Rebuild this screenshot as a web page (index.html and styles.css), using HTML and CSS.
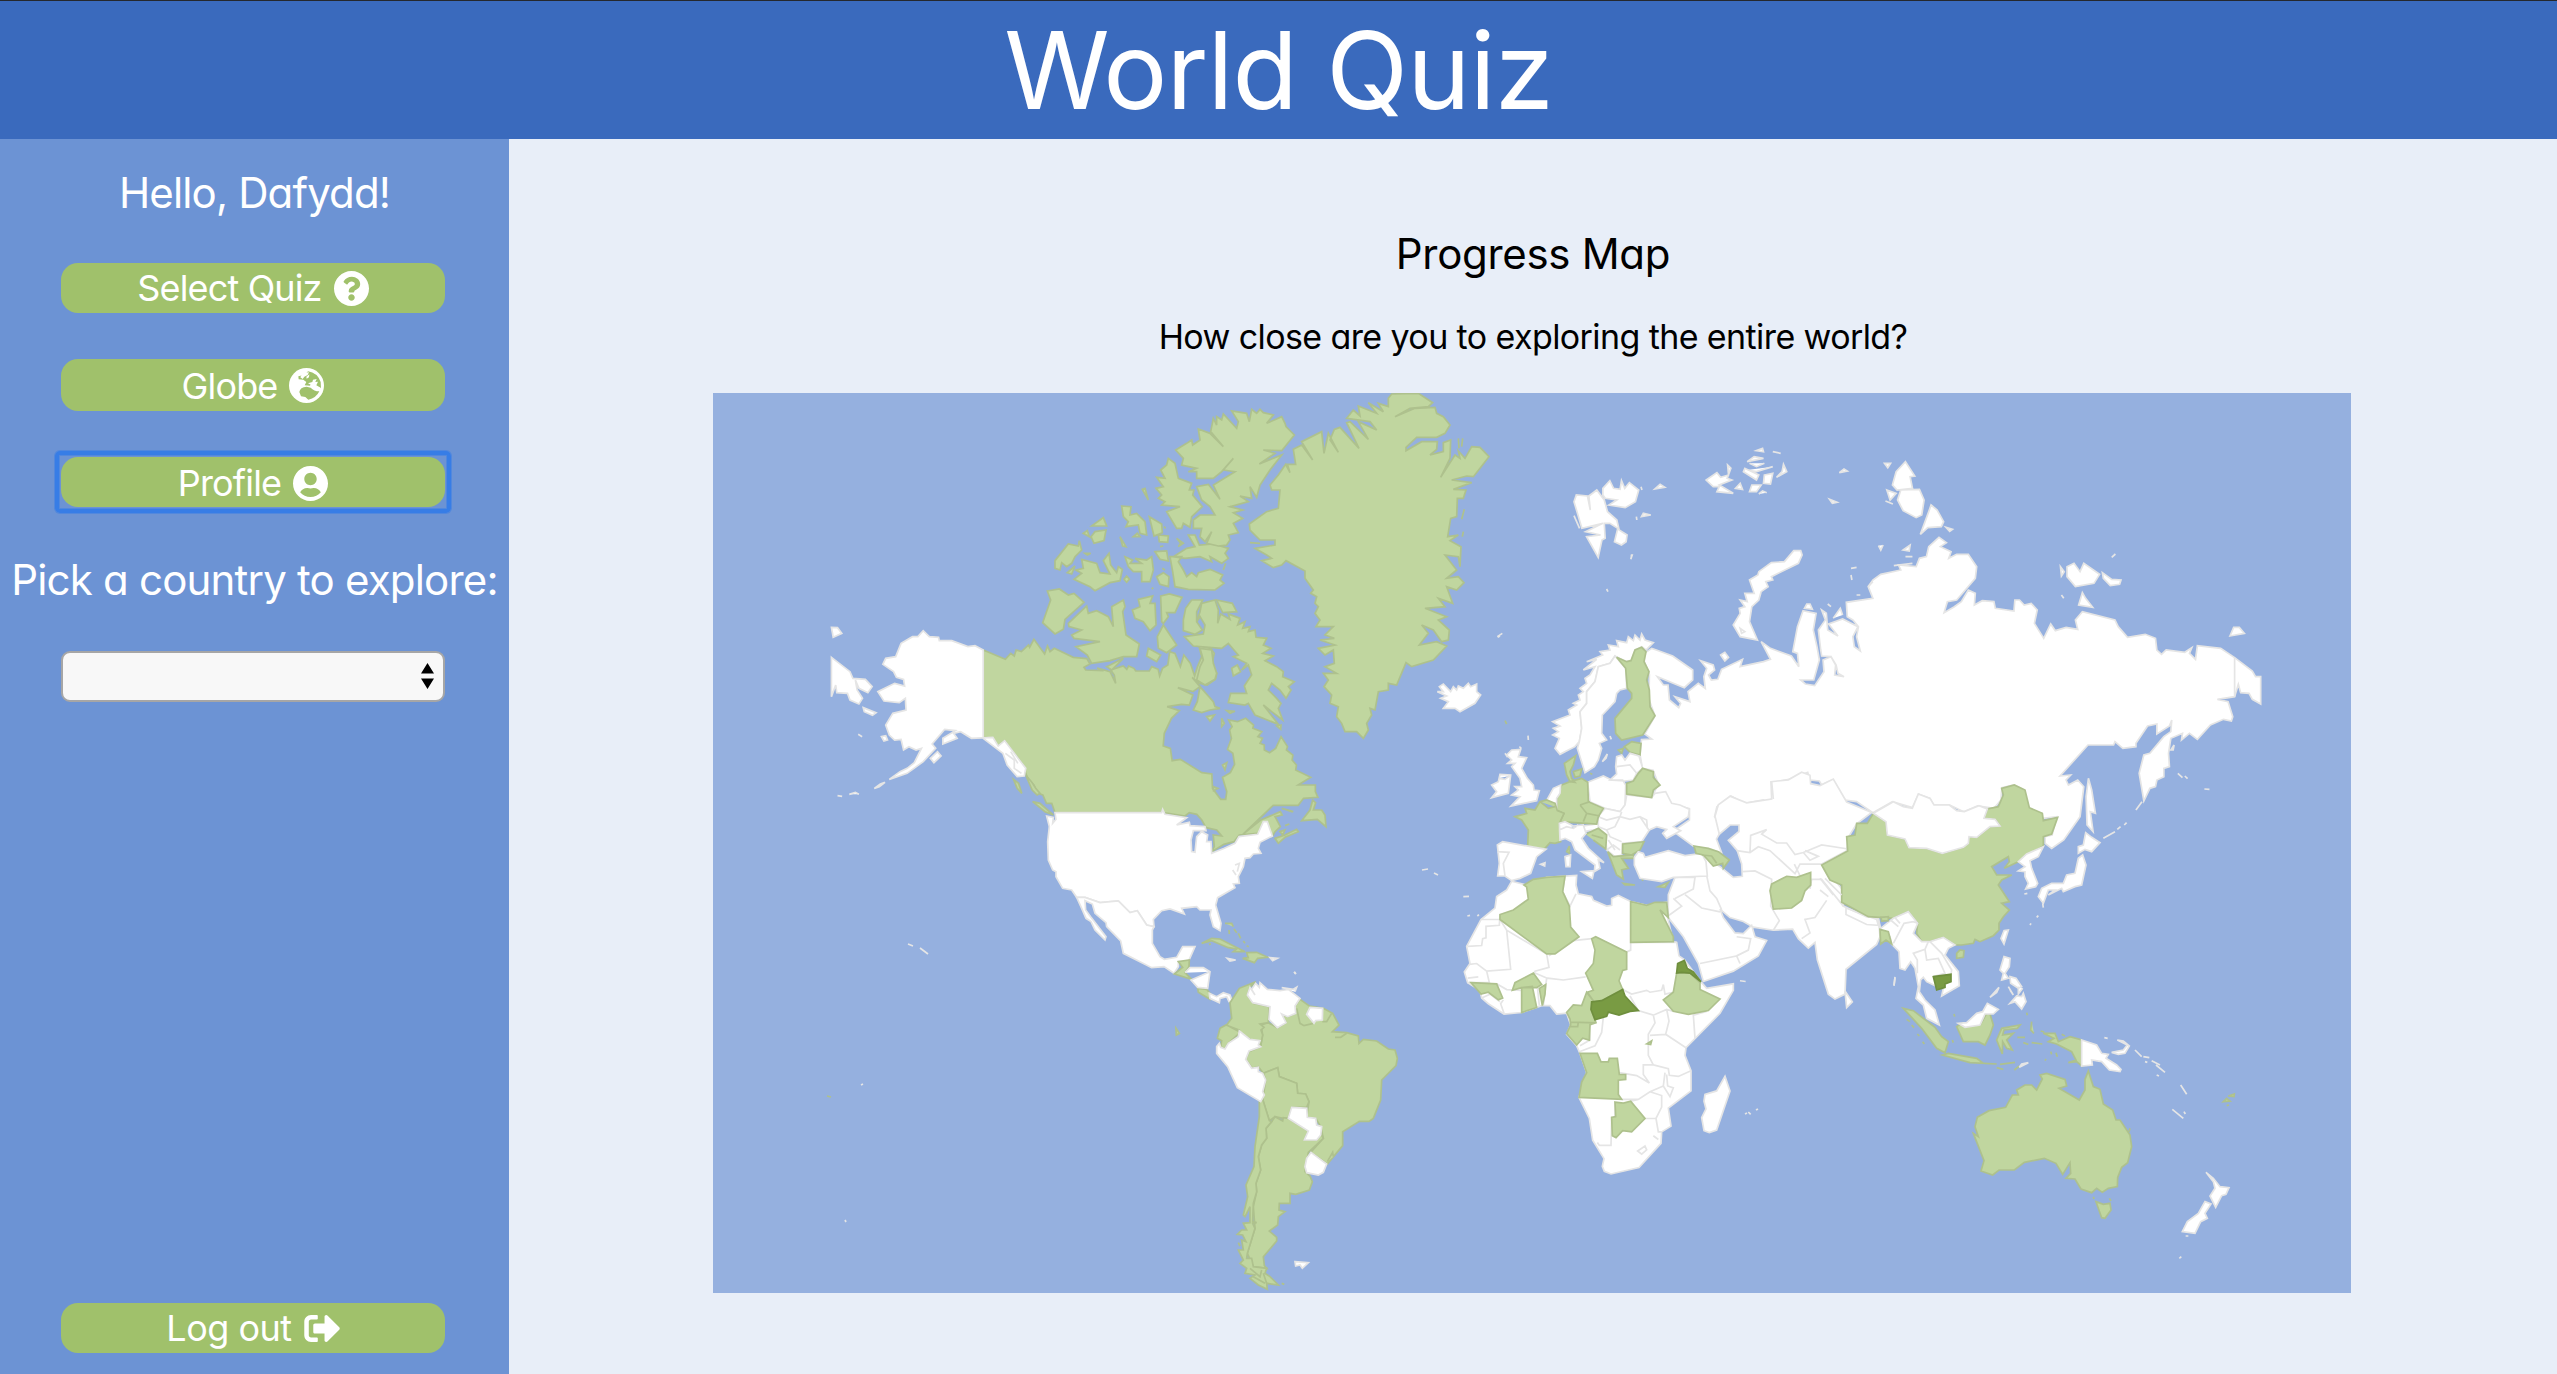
FILE: index.html
```html
<!DOCTYPE html>
<html lang="en">
<head>
<meta charset="utf-8">
<title>World Quiz</title>
<link rel="stylesheet" href="styles.css">
</head>
<body>
<header class="header"><h1 class="title">World Quiz</h1></header>
<div class="layout">
<aside class="sidebar">
<p class="greeting">Hello, Dafydd!</p>
<nav class="menu">
<button class="btn"><span class="label">Select Quiz</span><svg class="icon" viewBox="8 8 496 496"><path d="M504 256c0 136.997-111.043 248-248 248S8 392.997 8 256C8 119.083 119.043 8 256 8s248 111.083 248 248zM262.655 90c-54.497 0-89.255 22.957-116.549 63.758-3.536 5.286-2.353 12.415 2.715 16.258l34.699 26.31c5.205 3.947 12.621 3.008 16.665-2.122 17.864-22.658 30.113-35.797 57.303-35.797 20.429 0 45.698 13.148 45.698 32.958 0 14.976-12.363 22.667-32.534 33.976C247.128 238.528 216 254.941 216 296v4c0 6.627 5.373 12 12 12h56c6.627 0 12-5.373 12-12v-1.333c0-28.462 83.186-29.647 83.186-106.667 0-58.002-60.165-102-116.531-102zM256 338c-25.365 0-46 20.635-46 46 0 25.364 20.635 46 46 46s46-20.636 46-46c0-25.365-20.635-46-46-46z"/></svg></button>
<button class="btn btn-tall"><span class="label">Globe</span><svg class="icon" viewBox="505 324 105 105"><circle cx="557.500" cy="376.500" r="52.500"/><path class="cut" d="M540 347L552 345L562 334Q590 338 600 366L601 385L584 377L572 369L568 377L552 376L557 366L548 359L534 358L533 349ZM536 396Q538 381 558 380L570 383Q580 394 596 394Q587 414 563 419L554 411L541 409Z"/><path d="M541 347L552 338L565 337L561 345L551 350L546 357L539 352ZM557 350L566 343L565 352L558 356ZM562 370L575 366L577 359L588 357L584 366L592 365L587 376L600 383L597 391L572 375Z"/></svg></button>
<button class="btn btn-focus"><span class="label">Profile</span><svg class="icon" viewBox="0 8 496 496"><path d="M248 8C111 8 0 119 0 256s111 248 248 248 248-111 248-248S385 8 248 8zm0 96c48.6 0 88 39.4 88 88s-39.4 88-88 88-88-39.4-88-88 39.4-88 88-88zm0 344c-58.7 0-111.3-26.6-146.5-68.2 18.8-35.4 55.6-59.8 98.5-59.8 2.4 0 4.8.4 7.1 1.1 13 4.2 26.6 6.9 40.9 6.9 14.3 0 28-2.7 40.9-6.9 2.300-.7 4.700-1.100 7.100-1.100 42.900 0 79.700 24.400 98.500 59.800C359.300 421.400 306.700 448 248 448z"/></svg></button>
</nav>
<p class="pick">Pick a country to explore:</p>
<div class="select" role="listbox"><svg class="arrows" viewBox="0 0 13 26"><path d="M0 10.500L6.500 0L13 10.500ZM0 15.500H13L6.500 26Z"/></svg></div>
<button class="btn logout"><span class="label">Log out</span><svg class="icon icon-out" viewBox="0 64 504 384"><path d="M497 273L329 441c-15 15-41 4.500-41-17v-96H152c-13.300 0-24-10.700-24-24v-96c0-13.300 10.700-24 24-24h136V88c0-21.400 25.900-32 41-17l168 168c9.300 9.400 9.300 24.600 0 34zM192 436v-40c0-6.600-5.400-12-12-12H96c-17.700 0-32-14.300-32-32V160c0-17.700 14.300-32 32-32h84c6.600 0 12-5.400 12-12V76c0-6.600-5.400-12-12-12H96c-53 0-96 43-96 96v192c0 53 43 96 96 96h84c6.600 0 12-5.400 12-12z"/></svg></button>
</aside>
<main class="main">
<h2 class="heading">Progress Map</h2>
<p class="sub">How close are you to exploring the entire world?</p>
<svg class="map" viewBox="713 393 1638 900">
<!-- Canada -->
<g class="seen" transform="translate(800 390) scale(.35714 .33333)">
<path d="M513 780L575 808L590 790L600 798L605 780L620 785L640 765L643 772L655 748L685 792L693 768L700 785L712 775L765 802L803 806L812 822L795 832L800 840L850 842L832 834L868 845L884 880L880 855L870 840L905 828L915 838L920 828L935 835L940 843L978 843L985 830L1003 838L1007 858L1015 835L1030 825L1035 785L1050 790L1065 830L1075 795L1093 820L1105 858L1113 830L1125 800L1117 768L1150 775L1160 790L1153 820L1167 850L1163 868L1140 885L1118 880L1098 862L1120 890L1100 905L1058 893L1100 915L1090 945L1068 943L1028 950L1062 962L1040 985L1020 1030L1017 1068L1037 1075L1042 1112L1065 1108L1125 1148L1153 1152L1155 1195L1178 1228L1192 1228L1195 1205L1183 1162L1205 1148L1217 1123L1212 1090L1197 1078L1208 1045L1203 1020L1210 1010L1200 990L1225 995L1248 985L1270 1005L1268 1015L1293 1025L1282 1040L1295 1045L1288 1060L1300 1065L1300 1080L1315 1088L1332 1075L1347 1040L1365 1070L1362 1080L1380 1095L1378 1110L1390 1125L1388 1140L1430 1162L1395 1185L1443 1185L1443 1205L1450 1222L1410 1225L1395 1246L1325 1246L1240 1333L1290 1290L1345 1265L1350 1275L1330 1280L1345 1310L1330 1325L1323 1338L1280 1330L1230 1335L1215 1355L1187 1363L1152 1386L1160 1370L1157 1335L1181 1338L1167 1320L1137 1313L1125 1290L1111 1273L1090 1268L1078 1278L1017 1268L714 1268L705 1240L690 1240L680 1215L665 1210L655 1185L640 1170L632 1150L628 1130L573 1052L555 1068L540 1045L513 1042Z"/>
<path d="M598 1168L612 1180L621 1210L608 1195ZM1183 1125L1195 1118L1190 1140ZM1157 1190L1170 1195L1158 1202ZM632 1155L648 1175L660 1195L672 1210L664 1215L650 1200Z"/>
</g>
<g class="seen" transform="translate(1000 390) scale(.33333)">
<path d="M605 640L645 630L655 660L653 700L662 672L690 688L685 672L720 685L713 705L735 695L728 715L750 710L745 725L765 720L768 742L800 745L790 765L813 775L788 790L820 798L795 812L830 830L850 845L848 860L883 875L865 890L873 900L858 925L840 900L815 880L805 900L830 925L843 940L835 955L848 990L815 965L790 945L835 1003L765 975L745 940L735 945L685 938L692 910L740 910L733 888L755 855L745 825L725 840L740 820L700 800L715 795L685 760L665 775L580 768L553 740L610 732L615 705L600 680L590 695L600 665Z"/>
<path d="M575 630L608 630L590 665L590 695L607 720L585 733L550 722L550 690L557 655ZM650 630L697 640L710 665L668 668ZM600 775L635 780L640 820L650 850L645 868L615 885L590 870L600 830L610 810ZM600 890L640 935L645 950L660 955L630 960L605 968L580 960L592 935ZM620 980L643 975L630 993ZM665 985L673 1000L665 1010ZM695 835L712 825L722 845L700 858ZM680 962L705 964L690 970ZM830 1008L843 1005L842 1018Z"/>
<path d="M205 700L260 648L265 670L290 662L325 680L340 710L335 650L370 630L375 650L368 665L378 735L418 762L410 800L370 800L330 812L275 820L262 795L228 770L300 755L222 745L215 735L245 720L207 710ZM142 603L178 597L205 615L222 610L252 637L195 688L190 718L165 732L128 698L152 630ZM397 660L420 650L415 628L458 618L450 640L465 640L468 705L450 722L430 695L405 685ZM482 618L508 612L546 622L525 668L500 668L505 680L490 700L485 695ZM490 705L530 765L500 788L475 775L472 740ZM445 775L482 795L470 815L440 798ZM320 830L370 805L355 820L335 840Z"/>
<path d="M222 568L245 550L228 540L250 535L245 508L290 520L300 548L330 552L310 512L327 490L332 525L350 548L355 530L367 538L360 572L330 578L285 602L270 590ZM165 535L165 512L205 462L235 468L238 452L245 480L225 500L215 520L200 530L185 518L180 540ZM375 500L398 510L390 520L425 520L405 505L440 510L455 500L460 540L450 575L425 575L425 545L400 545L385 530ZM470 560L490 548L507 560L505 590L480 583ZM510 500L545 500L535 515L550 540L560 560L575 548L590 560L595 548L630 538L668 555L660 570L672 580L645 600L565 598L525 590L518 545ZM565 435L585 435L598 465L640 462L685 475L675 490L685 505L665 520L630 500L635 515L600 500L555 505L520 500L560 475L585 470ZM465 485L500 483L505 513L480 508Z"/>
<path d="M505 205L525 220L535 265L575 280L568 300L582 300L578 315L607 350L575 380L570 412L550 400L545 415L530 415L500 365L540 350L485 345L495 335L475 325L485 315L468 295L490 290L470 262L495 265L482 240L500 225Z"/>
<path d="M527 180L560 160L575 150L578 165L600 150L595 117L630 130L670 170L632 125L640 85L650 105L650 80L665 90L670 72L710 115L715 95L695 63L740 70L748 95L755 58L770 70L780 58L790 68L820 75L800 100L845 80L855 100L858 110L883 135L845 182L790 180L825 190L778 222L845 195L810 240L780 285L770 322L750 290L755 325L720 318L745 335L690 350L728 360L700 368L728 385L700 400L715 428L685 435L690 450L680 465L655 468L620 460L635 425L615 455L600 440L605 415L580 415L580 390L600 375L645 375L630 350L605 330L590 290L625 283L660 328L640 285L705 245L670 240L700 205L665 245L640 265L590 265L590 245L565 245L590 235L545 225L550 205Z"/>
<path d="M365 348L393 350L390 375L410 370L435 395L440 435L420 430L415 405L378 410L385 395L370 380ZM448 380L485 402L487 428L462 438ZM475 435L505 438L503 457L478 455ZM275 408L310 383L320 408ZM273 440L285 425L318 420L312 452L282 460ZM427 298L435 295L445 330ZM360 440L378 470L368 468ZM250 430L262 422L268 440ZM530 445L550 460L535 470L542 460ZM400 440L412 430L420 440ZM255 490L272 490L262 495ZM372 568L380 558L388 568L380 577ZM202 548L225 528L215 552ZM480 470L490 468M492 410L497 415M455 597L460 593M482 597L485 600M487 535L495 540M670 540L677 520"/>
</g>
<g class="seen" transform="translate(1030 780) scale(.33333)">
<path d="M815 122L840 90L848 60L857 68L850 90L875 90L885 105L888 140L862 118ZM735 175L765 165L800 148L805 155L765 172L745 190ZM750 155L765 150L758 165ZM755 85L790 95M770 90L785 95M765 137L778 132M8 65L30 70L70 105L45 95Z"/>
</g>
<!-- Greenland -->
<path class="seen" transform="translate(1000 390) scale(.33333)" d="M810 285L835 255L857 223L870 248L862 223L887 223L880 178L905 165L938 210L905 155L965 125L972 190L985 130L1015 187L990 150L1003 118L1020 112L1077 175L1040 98L1050 95L1105 148L1075 95L1130 120L1110 95L1040 85L1060 60L1080 78L1075 48L1130 70L1105 38L1150 65L1135 40L1165 50L1165 25L1175 12L1255 10L1298 38L1285 50L1230 55L1185 80L1245 55L1305 52L1310 70L1330 80L1350 105L1335 130L1310 142L1250 142L1218 172L1218 182L1265 155L1312 155L1310 178L1290 195L1330 185L1330 158L1352 150L1350 205L1322 262L1365 195L1380 205L1375 183L1395 205L1415 170L1440 172L1467 200L1440 235L1420 260L1400 258L1355 270L1415 278L1360 298L1398 300L1390 325L1372 325L1370 380L1352 385L1343 440L1375 435L1350 452L1383 470L1380 530L1375 500L1335 495L1370 540L1340 565L1375 560L1392 578L1370 600L1340 590L1358 640L1315 625L1335 650L1275 655L1340 680L1315 690L1348 720L1345 750L1325 755L1300 720L1265 705L1285 730L1258 765L1310 755L1340 768L1300 810L1235 830L1218 818L1190 885L1165 880L1165 900L1135 905L1125 960L1110 955L1115 975L1100 1000L1105 1020L1090 1045L1070 1025L1035 1025L1025 1000L1010 980L1015 950L990 940L995 915L972 890L985 870L970 850L1010 850L975 830L1003 820L1000 780L975 795L955 775L1005 765L960 750L1003 745L975 735L1000 710L948 710L960 690L945 670L955 650L945 640L950 620L932 610L940 600L915 565L915 543L858 512L845 525L820 533L785 512L815 505L800 495L765 475L825 465L825 450L780 450L750 420L748 402L800 365L835 355L840 300L815 300Z"/>
<g class="seen" transform="translate(1000 390) scale(.33333)"><path d="M1375 145L1377 175M1388 145L1385 170M1393 358L1385 388M1390 425L1387 440M750 458L780 460"/></g>
<!-- Alaska -->
<g class="unseen" transform="translate(800 390) scale(.35714 .33333)">
<path d="M513 780L490 767L470 770L425 752L390 752L388 742L362 740L345 722L330 740L315 740L283 760L268 800L240 805L232 823L262 845L270 862L290 868L293 888L265 880L218 905L235 933L278 938L295 925L297 960L260 970L240 1005L250 1035L265 1050L283 1048L290 1080L305 1070L325 1080L340 1075L320 1118L300 1135L280 1145L250 1168L300 1150L345 1115L380 1075L370 1062L405 1018L435 1022L400 1045L400 1062L440 1045L430 1030L450 1025L480 1045L540 1042L555 1068L573 1052L632 1135L628 1158L608 1160L580 1125L568 1090L513 1045Z"/>
<path d="M88 712L105 713L117 730L93 742ZM88 802L140 845L148 865L183 868L202 890L190 908L165 895L155 870L160 900L175 925L165 942L140 930L133 910L103 908L100 885L88 920ZM177 953L213 968L203 976L180 965ZM365 1105L385 1085L395 1098L375 1118ZM228 1040L240 1037L245 1050L235 1053ZM208 1195L225 1182L238 1177L222 1190ZM138 1213L155 1207L165 1213M105 1217L118 1219M163 1033L174 1040M575 1090L600 1110L600 1135L620 1150M590 1085L610 1120"/>
</g>
<!-- United States, Mexico, Central America -->
<g transform="translate(1030 780) scale(.33333)">
<path class="unseen" d="M75 98L395 98L398 88L405 103L470 113L440 135L478 127L480 137L525 140L528 152L490 152L483 180L485 215L495 217L500 170L515 155L533 165L530 185L543 185L545 220L583 205L615 190L627 170L683 163L700 125L712 125L727 168L690 187L685 205L693 220L670 222L660 233L645 235L640 260L625 290L628 310L610 312L615 323L563 353L557 375L573 430L570 452L550 440L540 405L543 390L510 390L500 380L455 385L463 402L420 387L395 392L370 418L372 440L350 435L322 392L300 398L265 363L210 368L165 352L140 352L125 330L98 325L78 290L78 275L68 270L55 240L53 185L58 140L50 108L70 112L68 130L78 118Z"/>
<path class="unseen" d="M140 352L165 352L210 368L265 363L300 398L322 392L350 435L372 440L367 450L367 490L390 530L403 538L440 532L458 500L495 500L475 545L445 545L445 560L432 580L402 560L365 563L280 520L272 483L230 440L228 428L195 400L187 372L165 362L167 390L183 412L228 470L225 480L195 450L183 425L168 415L155 385Z"/>
<path class="seen" d="M445 545L478 540L477 560L465 578L485 598L433 582L458 562ZM503 625L530 628L542 643L540 658L505 637Z"/>
<path class="unseen" d="M465 578L480 563L520 563L540 575L533 625L503 622L483 600L540 575M538 640L560 650L580 638L600 645L607 665L597 665L590 650L570 655L568 668L540 655Z"/>
<path class="seen" d="M515 490L545 475L570 477L645 515L610 515L620 507L595 503L545 482ZM638 535L655 533L650 518L680 517L713 532L683 535L673 548ZM585 430L605 430L610 440M612 447L620 458M625 460L632 475M597 450L598 462M640 483L645 490M650 497L656 500M537 493L543 492"/>
<path class="unseen" d="M592 535L617 540L600 543ZM720 533L742 535L728 542ZM793 575L798 582M608 270L618 285M615 255L628 250L622 275"/>
</g>
<!-- South America -->
<g transform="translate(1150 900) scale(.33333)">
<g class="seen">
<path d="M450 298L478 318L520 325L548 340L567 375L547 395L590 398L625 408L627 430L640 418L680 423L715 447L735 450L742 475L738 497L695 540L692 600L670 655L657 664L628 664L578 695L578 737L532 792L482 757L520 715L512 680L497 655L470 652L477 605L467 582L443 580L440 550L388 530L383 503L340 520L325 500L307 505L287 478L297 455L332 440L338 405L333 375L355 368L382 383L408 368L395 342L413 350L437 340L435 318Z"/>
<path d="M440 325L450 370L462 377L490 370M517 365L530 365L545 340M555 412L572 412L590 400M532 785L548 757L550 770"/>
<path d="M317 245L300 262L292 285L310 310L358 320L355 368L330 372L342 382L333 390L338 405L332 435L300 418L268 395L230 375L245 355L240 308L268 265ZM228 375L268 390L268 400L235 430L225 447L212 440L215 422L202 415L210 385Z"/>
<path d="M340 520L383 503L388 530L440 550L443 580L467 582L477 605L470 622L425 622L415 655L400 655L375 650L358 662L338 598L347 540Z"/>
<path d="M365 665L375 650L398 663L400 653L415 655L475 693L463 720L500 720L512 700L520 715L475 757L465 815L480 828L487 845L478 870L437 883L420 880L420 910L388 910L387 930L405 935L385 950L383 975L358 993L380 1012L380 1023L340 1070L343 1097L350 1105L310 1100L292 1060L315 985L310 920L320 875L318 850L332 810L325 770L335 735L350 715L348 685Z"/>
<path d="M328 605L338 598L358 662L365 665L348 685L350 715L335 735L325 770L332 810L318 850L320 875L310 910L308 965L320 968L308 970L315 985L292 1060L290 1075L305 1075L310 1100L350 1105L345 1120L360 1130L385 1155L350 1150L352 1168L325 1155L300 1135L315 1125L285 1120L290 1105L270 1090L280 1080L265 1050L280 1050L275 1020L288 1025L278 1005L262 1003L275 990L290 990L280 970L300 968L300 920L285 950L280 945L293 890L288 855L312 800L315 740L328 650Z"/>
<path d="M78 385L88 400L79 405ZM300 1105L330 1130L335 1110M310 1130L345 1150M340 1120L350 1150M395 1150L403 1153M265 1028L270 1038"/>
</g>
<g class="unseen">
<path d="M317 250L328 262L330 248L352 268L390 272L415 268L450 295L435 318L437 340L413 350L395 342L408 368L382 383L357 358L360 320L308 308L292 285L300 262L315 285L305 268ZM480 322L518 325L517 360L497 362L492 370L470 343ZM395 263L430 268L440 262L435 275"/>
<path d="M268 393L300 418L330 422L325 435L332 440L297 453L287 478L305 505L325 502L325 515L338 520L347 540L338 575L343 585L332 605L262 563L233 500L200 460L200 440L208 430L212 442L225 447L235 430L265 410ZM425 622L470 625L472 652L497 655L500 675L515 680L512 705L500 720L463 720L475 693L415 655ZM483 757L530 792L520 817L505 825L470 818L465 800L470 775ZM435 1085L475 1088L457 1105L450 1095L437 1098ZM432 216L437 222"/>
</g>
</g>
<!-- Eurasia, first the broad land masses -->
<g class="unseen" transform="translate(1540 420) scale(.46556 .33333)">
<path d="M224 700L240 685L250 690L285 708L328 750L328 780L310 803L252 770L265 795L275 795L278 840L298 863L302 850L290 830L322 845L318 815L340 790L355 805L352 770L358 745L345 722L372 735L375 750L362 765L368 780L382 778L390 748L435 718L430 740L480 725L495 718L475 665L495 685L540 708L556 740L553 700L543 695L553 620L565 572L593 580L587 630L595 680L600 720L588 780L560 780L570 792L590 797L610 755L608 720L625 710L635 735L633 765L653 770L640 760L636 735L625 710L605 708L603 690L598 630L613 600L605 570L615 580L618 630L640 648L620 612L650 597L683 620L672 650L675 680L688 693L680 650L684 620L672 600L660 590L658 547L715 535L705 500L715 480L732 463L775 450L770 435L808 440L815 415L830 410L835 380L857 352L873 368L860 380L883 395L878 415L895 403L920 403L938 440L935 475L895 540L875 545L868 578L890 560L905 545L920 510L935 520L933 555L950 542L975 545L978 565L1018 573L1020 540L1030 540L1040 555L1055 550L1068 570L1062 610L1082 655L1097 612L1107 632L1130 622L1155 628L1150 600L1165 575L1235 600L1242 620L1262 652L1300 643L1322 655L1325 690L1335 703L1345 690L1385 697L1400 683L1395 700L1408 718L1412 677L1462 685L1492 713L1530 753L1537 770L1548 770L1548 852L1530 838L1523 820L1505 818L1500 793L1492 830L1455 838L1478 845L1488 890L1485 903L1468 898L1440 915L1412 958L1395 940L1378 960L1380 940L1355 955L1350 1000L1352 1040L1340 1045L1340 1070L1325 1080L1322 1100L1310 1105L1297 1143L1287 1060L1297 1005L1310 1000L1340 950L1355 935L1357 900L1352 918L1325 942L1325 912L1305 918L1280 970L1280 980L1252 985L1235 965L1232 975L1177 975L1117 1068L1140 1065L1130 1080L1135 1095L1155 1080L1168 1100L1160 1190L1125 1260L1099 1285L1085 1270L1085 1250L1100 1245L1110 1190L1080 1195L1050 1165L1040 1110L1018 1095L992 1103L990 1140L975 1165L940 1158L910 1175L880 1155L845 1155L838 1135L813 1122L800 1163L757 1145L715 1178L680 1145L655 1140L627 1080L605 1095L600 1083L580 1080L575 1057L535 1078L497 1088L500 1130L490 1150L480 1140L440 1150L410 1128L380 1160L375 1190L394 1220L379 1257L390 1298L329 1278L286 1234L321 1200L321 1166L283 1152L268 1117L241 1131L254 1091L243 1051L220 1045L215 1005L218 959L240 957L225 942L247 888L234 838L235 764L224 724Z"/>
<path d="M545 392L560 392L563 405L555 430L497 470L500 480L485 485L490 500L475 515L470 540L455 560L450 605L467 660L430 650L415 615L430 580L428 565L440 560L430 540L445 545L440 520L460 520L450 480L468 465L470 455L497 428L525 425ZM430 625L440 635L433 640Z"/>
<path d="M73 245L78 225L102 228L108 270L105 228L122 210L138 240L145 275L165 300L170 330L187 345L185 365L175 375L160 365L167 325L150 310L138 310L140 355L133 360L125 412L100 350L130 345L98 335L135 310L90 325ZM135 225L135 205L150 182L158 205L172 208L175 182L182 205L192 188L212 210L205 245L183 263L148 255L165 240L140 235ZM247 207L258 193L268 202ZM218 290L222 280L238 285ZM73 287L85 325M195 405L198 405L195 418M143 507L146 515M207 290L208 300M217 200L219 210"/>
<path d="M357 180L380 158L388 172L405 165L403 135L410 145L402 175L412 180L385 195L415 220L380 215L385 200L372 200ZM437 155L465 180L470 165L440 145ZM445 125L480 115L460 110ZM465 92L478 85L480 95ZM482 165L500 160L495 192L480 190ZM508 172L520 155L523 133L530 155ZM450 215L455 195L475 195L465 215ZM500 95L517 100M450 130L465 140L482 130M445 150L465 155L500 140M420 205L430 190L435 208ZM470 222L478 213L487 218M643 158L653 147L660 153ZM622 238L638 247L628 250Z"/>
<path d="M785 125L805 168L795 170L800 205L767 210L757 195L765 155ZM745 210L765 220L752 240ZM775 210L815 208L825 240L820 285L808 293L780 272L768 240ZM840 255L853 270L867 305L862 320L833 323L817 343L835 275ZM740 130L753 130L747 143ZM872 322L886 328L880 334ZM742 243L758 252M727 377L732 390L737 375M780 390L795 375L793 393ZM785 410L800 410M760 437L800 430M668 445L680 442M668 465L670 480M680 525L688 525M705 500L715 485"/>
<path d="M1132 440L1147 430L1160 455L1168 430L1202 463L1190 490L1150 500L1132 470ZM1208 458L1228 478L1248 480L1245 493L1225 497L1210 475ZM1157 555L1165 518L1172 535L1187 562ZM1118 440L1126 455L1120 468ZM1228 412L1236 402M1120 525L1125 535M1482 648L1490 622L1502 622L1513 640ZM388 705L397 697L405 712L397 723ZM568 565L573 552L580 552L585 568ZM618 552L625 560M630 595L645 565L650 585M1492 713L1492 830"/>
<path d="M1178 1075L1185 1110L1193 1180L1182 1175L1188 1235L1175 1215L1173 1130ZM1280 1170L1293 1145M1210 1255L1235 1235M1240 1228L1247 1220M1255 1215L1260 1208M1370 1060L1380 1073M1385 1068L1391 1076M1427 1107L1438 1108M1355 990L1362 975L1360 990Z"/>
</g>
<g class="unseen" transform="translate(1400 600) scale(.33333 .38265)">
<path d="M945 565L955 535L990 513L1040 530L1115 520L1113 475L1165 470L1205 450L1230 458L1232 480L1260 485L1300 468L1340 528L1415 555L1370 585L1345 620L1340 655L1265 690L1330 760L1330 800L1400 828L1435 830L1440 880L1430 900L1338 965L1335 1030L1305 1043L1285 1030L1252 940L1245 895L1225 910L1195 885L1178 860L1120 863L1060 855L1030 840L990 830L960 808L970 830L1005 870L1030 872L1055 850L1065 880L1100 890L1075 930L1000 970L910 997L895 950L850 880L805 830L805 770L825 725L920 720L900 662L965 700L1000 725L1027 722L1025 690L1012 655L985 628L1017 605L1017 588L990 588L958 612Z"/>
<path class="line" d="M1050 660L1052 615L1100 600L1085 612L1130 635L1160 635L1185 665L1210 660L1265 640L1340 650M1010 655L1050 660L1075 645L1110 655L1185 715L1200 690L1265 690M1027 710L1065 708L1115 730L1112 800L1138 838L1120 863M1210 660L1230 680L1255 670L1215 655M1280 785L1245 830L1215 835L1230 870L1205 885M1230 755L1235 730L1265 730L1330 800M1338 805L1430 835L1435 850L1400 848L1338 822ZM825 725L885 725L880 755L825 780M920 720L930 760L950 780L965 810M855 770L905 805L960 815M805 825L845 800L820 780M900 950L1010 930L1020 950M1010 930L1045 915L1052 885L1010 880M1115 475L1120 520M1183 690L1200 720"/>
<path d="M1335 1022L1357 1050L1340 1065ZM1485 985L1482 1008M1020 995L1037 997"/>
</g>
<!-- Europe -->
<g transform="translate(1440 620) scale(.33333)">
<path class="unseen" d="M605 42L600 60L585 45L580 62L565 50L560 68L530 62L535 80L505 75L510 90L480 95L488 105L440 125L470 118L430 150L465 140L450 165L435 175L440 190L420 205L430 215L415 225L420 240L400 250L410 255L385 270L390 285L338 305L360 318L340 325L355 335L338 345L358 355L345 385L360 403L385 390L405 380L418 365L425 325L420 275L440 250L440 215L465 185L475 140L510 130L525 108L560 125L575 120L585 90L605 80L618 90L640 68L615 60Z"/>
<path class="unseen" d="M525 108L557 145L560 205L540 210L530 220L525 245L487 285L485 340L500 360L478 370L485 385L475 420L463 440L435 458L412 385L418 365L425 325L420 275L440 250L440 215L465 185L475 140L510 130ZM487 425L502 402L498 415ZM510 348L514 358M264 347L265 360M172 50L187 40"/>
<path class="seen" d="M530 112L560 125L573 122L585 90L605 82L618 95L612 125L627 155L620 180L628 210L630 260L645 287L608 345L545 360L527 340L525 295L575 235L575 220L562 205L557 145ZM553 380L575 365L603 370L600 405L570 397ZM535 390L550 385L545 400ZM195 302L200 312"/>
<path class="unseen" d="M527 440L530 410L545 405L555 420L570 400L597 408L608 445L590 460L580 480L555 483L510 480L530 462ZM443 487L490 468L515 480L548 480L557 495L555 555L540 575L495 565L450 545Z"/>
<path class="unseen" d="M560 525L635 533L645 520L677 515L695 550L720 555L748 568L745 590L700 620L722 632L680 655L668 640L680 628L650 620L628 630L605 665L548 670L545 705L525 710L500 690L497 650L470 628L430 635L430 618L470 612L478 585L495 565L540 575L555 555Z"/>
<path class="line" d="M530 440L570 435L590 460M475 590L500 600L540 590L570 598L600 590L628 632M545 575L540 590L525 620L500 630L510 650L545 665M475 600L475 620L500 630M600 590L620 600L622 625M500 690L520 675L540 690M505 660L525 690"/>
<path class="seen" d="M608 445L640 455L640 472L660 495L640 510L635 533L560 522L560 490L580 483L595 460ZM365 495L390 485L425 475L443 487L445 545L490 565L475 590L470 612L360 605L372 580L350 570L352 530ZM420 555L440 580L430 605M420 555L450 545M440 580L480 588M373 430L407 407L400 435L390 455L395 475L405 487L390 485L380 465ZM400 455L425 447L420 468L405 472ZM450 460L457 463M437 643L475 625L500 645L497 687L460 660M455 645L490 655M548 672L612 665L600 690L575 705L548 700ZM503 695L520 710L580 705L583 715L545 715L565 745L545 750L550 778L530 765ZM550 790L585 795L555 795ZM655 800L685 787L675 802ZM380 695L388 678L388 700ZM605 778L610 782"/>
<path class="unseen" d="M318 545L340 505L362 495L360 520L350 535L350 570L345 550Z"/>
<path class="seen" d="M225 590L260 580L255 565L285 570L300 545L320 540L345 550L352 572L372 580L358 610L362 665L345 670L330 668L312 688L263 680L265 630L245 600ZM300 545L325 565L345 560"/>
<path class="unseen" d="M172 675L188 665L318 688L290 710L272 760L240 775L215 782L195 768L173 768L178 730ZM172 695L207 697L190 730L195 768M302 733L315 728L314 738ZM358 610L375 605L400 618L430 615L438 640L425 655L445 685L492 728L475 720L480 745L463 755L465 735L405 690L395 665L375 655L360 660ZM358 630L380 620L400 625L415 615M425 755L462 752L457 775ZM375 710L392 705L390 740L378 740ZM70 830L87 829M82 888L90 886M112 888L117 884"/>
<path class="unseen" d="M583 712L595 695L610 700L615 712L685 692L735 707L785 700L798 725L802 768L700 772L665 785L600 775L583 735Z"/>
<path class="seen" d="M762 678L805 685L835 695L868 720L850 745L848 730L820 738L790 705L768 700ZM785 705L815 708L830 730"/>
<path class="unseen" d="M215 390L242 388L235 410L260 413L245 445L262 475L280 495L282 510L298 512L290 542L213 558L240 530L215 525L235 510L225 500L245 500L240 475L215 440L225 430L203 430L215 420L200 405ZM155 495L175 485L180 463L212 465L205 520L155 533L170 515ZM175 475L195 478L208 468M195 400L203 412M238 380L244 385"/>
</g>
<path class="unseen" transform="translate(1000 390) scale(.33333)" d="M1312 905L1330 905L1318 890L1330 882L1352 905L1360 890L1370 900L1375 888L1390 895L1405 880L1412 890L1430 882L1430 905L1442 915L1425 940L1380 965L1365 955L1330 955L1345 935L1322 925L1340 918ZM1493 742L1500 738"/>
<!-- Africa -->
<g transform="translate(1400 600) scale(.33333 .38265)">
<path class="unseen" d="M335 735L380 745L440 725L530 720L528 745L535 768L575 775L580 785L620 800L635 798L635 780L655 772L692 788L740 798L800 790L803 830L820 893L830 895L837 930L853 940L905 1000L920 1015L1000 1003L1000 1020L960 1080L858 1170L855 1190L873 1230L873 1283L805 1328L813 1375L785 1390L783 1420L717 1483L633 1500L613 1493L607 1480L612 1460L578 1412L568 1355L537 1300L560 1235L540 1185L530 1165L500 1135L512 1110L500 1080L470 1082L450 1060L425 1060L365 1078L312 1082L265 1055L245 1040L240 1020L203 1000L193 972L210 950L200 905L243 835L285 805L290 775L320 758Z"/>
<path class="unseen" d="M975 1245L990 1283L950 1385L928 1392L912 1387L905 1353L918 1330L912 1310L915 1292L950 1283ZM1045 1338L1052 1344M1068 1333L1074 1330"/>
<path class="line" d="M203 905L245 903L248 885L258 883L258 853L298 850L300 822M243 835L300 835M320 863L332 965L260 970L230 950L208 952M300 835L320 863L440 925L447 960L405 970L400 978M447 930L520 890L575 885M557 985L490 993L440 988L430 1060M405 975L440 988M260 970L268 1000L203 1000M203 988L235 985M495 722L488 762L510 800L528 768M692 788L692 915L680 920M692 895L830 895M668 1018L695 1030L740 1020L750 1025L785 1020L790 1005L795 1030L820 1025M690 1035L715 1073L760 1085L800 1070L820 1075M610 1090L605 1130L585 1165L540 1180M760 1085L765 1105L745 1135L745 1190L760 1215L730 1215L730 1240L748 1262L710 1243L658 1235M800 1070L807 1100L797 1135L858 1170M797 1135L750 1138M920 1075L880 1085L885 1145M760 1215L805 1225L808 1242L835 1245L873 1230M665 1305L715 1305L750 1285L790 1270L795 1235M800 1240L803 1270L820 1275L810 1298L790 1270M692 1310L715 1305M750 1285L785 1295L785 1325L768 1355L735 1355M645 1312L645 1352L635 1352L633 1425L598 1425L592 1418M768 1355L775 1390L785 1390M760 1400L775 1410M713 1440L735 1427L740 1437L725 1448ZM365 1020L320 1018L290 1003M310 1045L302 1055L312 1080M245 1040L270 1030L300 1050M412 1010L418 1060M588 1090L568 1115L570 1150L540 1165"/>
<path class="seen" d="M372 745L400 730L440 725L495 722L488 762L508 800L512 855L537 880L465 925L440 925L300 835L300 822L340 810L385 782L380 750ZM692 788L740 798L765 790L800 790L805 830L780 810L820 880L820 893L692 895ZM575 885L587 880L680 920L680 965L668 968L657 995L668 1018L605 1047L582 1050L562 1025L580 1020L557 975L580 950L585 915ZM830 975L870 975L900 1000L900 1018L960 1043L925 1073L865 1083L820 1075L790 1045L820 1025ZM560 1025L582 1050L573 1070L588 1105L570 1110L568 1150L548 1145L530 1163L500 1133L512 1110L510 1095L500 1078L520 1058L545 1060ZM512 1103L588 1105M535 1103L533 1115L512 1115M540 1185L592 1185L603 1207L625 1207L628 1198L652 1198L658 1240L677 1240L677 1253L655 1255L655 1292L665 1305L537 1300L545 1260L560 1235ZM645 1312L670 1315L692 1310L735 1355L695 1390L668 1387L648 1405L637 1400L635 1352L647 1350ZM337 1020L345 1000L400 975L425 1005L410 1013L365 1013ZM365 1013L397 1010L410 1065L365 1078ZM418 1015L437 1005L435 1030L427 1060ZM213 1000L290 1003L308 1040L295 1045L265 1025L243 1030ZM740 1160L755 1152L752 1162Z"/>
<path class="best" d="M575 1050L605 1047L668 1018L675 1035L715 1073L690 1075L657 1085L625 1077L620 1088L585 1097L573 1070ZM833 950L853 942L862 963L880 972L903 998L870 975L845 973L830 975Z"/>
<path class="seen" d="M1115 742L1160 722L1190 725L1232 712L1232 745L1215 760L1205 785L1175 805L1120 808L1110 760Z"/>
</g>
<!-- East Asia and Oceania -->
<g transform="translate(1780 740) scale(.33333)">
<path class="seen" d="M280 220L318 245L322 285L375 297L387 323L440 325L487 340L550 322L567 290L590 292L630 260L660 258L645 238L612 235L622 207L655 200L670 165L665 145L703 135L735 150L748 203L787 220L790 242L833 232L815 282L790 290L790 318L715 365L673 385L688 365L685 350L635 380L650 405L695 405L665 420L655 435L688 485L665 490L688 510L670 530L657 550L657 570L640 587L600 605L585 598L580 610L545 615L525 615L490 592L450 605L425 605L410 580L413 550L385 515L340 535L265 530L185 487L185 435L150 420L125 375L203 333L200 290L225 285L230 250L262 250Z"/>
<path class="unseen" d="M280 220L340 185L370 200L397 205L415 162L450 175L462 195L508 195L530 212L553 215L597 197L622 207L612 235L645 238L660 258L630 260L590 292L567 290L565 310L550 322L487 340L440 325L387 323L375 297L322 285L318 245Z"/>
<path class="unseen" d="M295 535L302 565L340 535L385 515L413 550L400 580L425 605L450 605L490 592L525 615L505 625L495 645L535 695L538 737L485 768L490 745L467 738L440 725L430 712L422 720L418 755L435 780L465 810L478 855L440 835L430 795L408 775L415 740L405 685L392 665L375 690L360 685L357 635L335 612L330 590L300 570Z"/>
<path class="line" d="M413 550L400 545L372 550L340 610M412 700L412 660L400 640L435 628L445 605M435 628L440 660L475 655L495 700L460 710M450 605L485 640L515 690L513 703M332 540L355 560M345 533L360 550M120 415L160 465M135 415L185 465M120 450L145 470"/>
<path class="seen" d="M530 640L540 630L552 632L550 652L530 655ZM300 568L325 575L335 612L318 600L302 612ZM303 532L325 530L325 542L305 543ZM370 805L400 812L465 862L485 890L505 905L495 938L470 925L425 865ZM487 945L505 940L590 955L610 970L570 968ZM530 860L545 850L600 855L620 820L630 822L640 855L630 885L615 915L595 905L550 905ZM650 900L665 865L720 855L712 865L672 870L668 885L700 880L680 900L697 930L680 925L668 905L667 942ZM790 880L825 880L835 905L870 890L905 900L905 978L890 965L865 968L888 960L875 935L830 912L805 905L822 895ZM380 838L390 845M395 855L402 863M412 882L418 888M428 905L433 912M517 900L520 908M522 822L524 830M612 970L650 972M660 973L705 967M650 983L670 988M703 990L718 978M755 845L752 870L762 880M712 892L735 892M755 908L787 912M730 908L745 913M740 818L742 826M782 873L793 876M812 935L815 943M795 962L798 957M828 938L832 950M845 883L855 888"/>
<path class="unseen" d="M535 850L560 848L590 820L608 815L622 790L655 808L640 822L615 822L600 855L555 862ZM905 900L950 915L965 940L985 943L978 955L1010 975L1023 988L1020 995L988 990L965 965L935 960L937 975L905 978ZM995 937L1030 930L1042 915L1012 900L1030 903L1048 918L1035 940L1015 943ZM718 982L725 972L745 968ZM973 893L983 895M1065 930L1085 950M1095 965L1102 967M1090 950L1108 953M1115 962L1140 975M1128 975L1155 997M1130 1005L1137 1008M1202 1035L1220 1063M1177 1108L1210 1135M1212 1115L1216 1122M345 713L342 737M1198 1555L1204 1550"/>
<path class="best" d="M460 710L513 703L513 725L495 732L495 742L470 750Z"/>
<path class="unseen" d="M715 365L740 342L790 320L775 350L750 362L755 385L773 430L767 440L737 447L745 430L735 410L735 395L715 393L735 380ZM917 278L935 292L960 308L935 335L915 328L895 340L895 320L910 315ZM908 345L918 375L905 435L885 440L850 455L845 445L805 465L825 450L805 450L790 490L775 470L785 445L815 430L850 430L860 405L885 400L895 355ZM788 490L790 503M672 572L685 570L672 612L663 595ZM672 650L690 655L688 680L675 700L685 715L665 720L670 700L660 690ZM690 710L708 715L725 740L715 745L692 730ZM690 790L710 768L725 770L730 760L738 785L725 807L705 785ZM685 740L700 765L690 750M715 740L715 762L728 745M630 772L657 742L650 757ZM733 462L742 460M770 532L775 527M750 555L753 550"/>
<path class="seen" d="M592 1132L627 1112L677 1102L697 1065L715 1065L710 1050L735 1035L755 1035L770 1050L787 1017L780 1005L800 1000L855 1018L860 1038L837 1045L898 1080L915 1050L915 1018L925 993L940 1040L960 1048L970 1092L998 1110L1008 1140L1020 1140L1050 1185L1055 1220L1043 1268L1025 1282L1013 1312L1012 1340L985 1345L967 1357L950 1345L935 1358L903 1347L885 1317L858 1315L872 1300L870 1268L848 1303L828 1270L793 1255L733 1267L703 1290L657 1290L638 1305L603 1293L612 1262L580 1180L595 1190L585 1160ZM948 1385L970 1393L990 1390L993 1410L975 1435L965 1433ZM940 1370L942 1377M988 1375L993 1383M1330 1085L1340 1075L1350 1083ZM1345 1068L1363 1062L1362 1070ZM1340 1097L1347 1095M1050 1165L1047 1175"/>
<path class="unseen" d="M1278 1297L1300 1315L1320 1340L1347 1343L1338 1363L1325 1367L1307 1402L1290 1368L1305 1345L1300 1325ZM1275 1385L1293 1392L1275 1420L1282 1435L1262 1445L1245 1480L1207 1475L1222 1445L1255 1420ZM1217 1488L1225 1488"/>
</g>
<!-- Pacific and Atlantic islets -->
<path class="unseen" d="M908 944L913 946M920 948L928 954M845 1220L846 1222M1745 1114L1747 1113M1422 870L1428 869M1434 873L1438 875M861 1085L863 1084"/>
<path class="seen" d="M827 1096L831 1097"/>
</svg>
</main>
</div>
</body>
</html>
```
FILE: styles.css
```css
* { box-sizing: border-box; margin: 0; padding: 0; }
body {
  height: 1374px;
  display: flex;
  flex-direction: column;
  overflow: hidden;
  background: #e8eef8;
  font-family: Inter, "Noto Sans", sans-serif;
  font-feature-settings: "cv11";
  white-space: nowrap;
}
.header {
  height: 139px;
  flex: none;
  display: flex;
  align-items: center;
  justify-content: center;
  border-top: 1px solid #25282d;
  background: #3a6abd;
  color: #fff;
}
.title { font-size: 107px; font-weight: 400; letter-spacing: -0.9px; }
.layout { flex: 1; display: flex; }
.sidebar {
  width: 509px;
  flex: none;
  display: flex;
  flex-direction: column;
  padding: 23px 64px 21px 61px;
  background: #6c93d4;
  color: #fff;
}
.greeting, .pick {
  height: 61px;
  display: flex;
  align-items: center;
  justify-content: center;
  margin: 0 -64px 40px -61px;
  font-size: 42px;
  letter-spacing: -0.85px;
}
.pick { margin-top: 42px; margin-bottom: 41px; letter-spacing: -0.8px; }
.menu { display: flex; flex-direction: column; gap: 46px; }
.btn {
  position: relative;
  height: 50px;
  display: flex;
  align-items: center;
  justify-content: center;
  gap: 12px;
  border: 0;
  border-radius: 17px;
  background: #a0c16b;
  color: #fff;
  font: inherit;
  font-feature-settings: inherit;
  font-size: 36px;
  letter-spacing: -0.85px;
}
.btn-tall { height: 52px; padding-top: 1px; }
.btn-focus { padding-top: 2px; outline: none; }
.btn-focus::after {
  content: "";
  position: absolute;
  inset: -6px;
  border: 4px solid #377de6;
  border-radius: 5px;
  box-shadow: 0 0 0 1px #5288dd, inset 0 0 0 1px #5288dd;
}
.icon { width: 35px; height: 35px; fill: #fff; }
.icon-out { width: 36px; height: 27px; }
.cut { fill: #a0c16b; }
.logout { margin-top: auto; letter-spacing: -0.5px; }
.select {
  height: 51px;
  display: flex;
  align-items: center;
  justify-content: flex-end;
  padding-right: 9px;
  padding-bottom: 2px;
  border: 2px solid #a6a6a6;
  border-radius: 9px;
  background: #f8f8f8;
}
.arrows { width: 13px; height: 26px; fill: #000; }
.main {
  flex: 1;
  display: flex;
  flex-direction: column;
  align-items: center;
  padding-top: 84px;
  color: #000;
}
.heading {
  height: 61px;
  line-height: 61px;
  margin-bottom: 28px;
  font-size: 42px;
  font-weight: 400;
  letter-spacing: -0.3px;
}
.sub { height: 50px; line-height: 50px; margin-bottom: 31px; font-size: 34px; letter-spacing: -0.6px; }
.map { width: 1638px; height: 900px; margin-right: 2px; flex: none; background: #95b0df; }
.map path { stroke-width: 1.7; vector-effect: non-scaling-stroke; }
.seen, .seen path { fill: #c0d69f; stroke: #aec18d; }
.unseen, .unseen path { fill: #fff; stroke: #e5e5e5; }
.best { fill: #799b43; stroke: #6f8f3e; }
.map path.line { fill: none; stroke: #e5e5e5; }
```
